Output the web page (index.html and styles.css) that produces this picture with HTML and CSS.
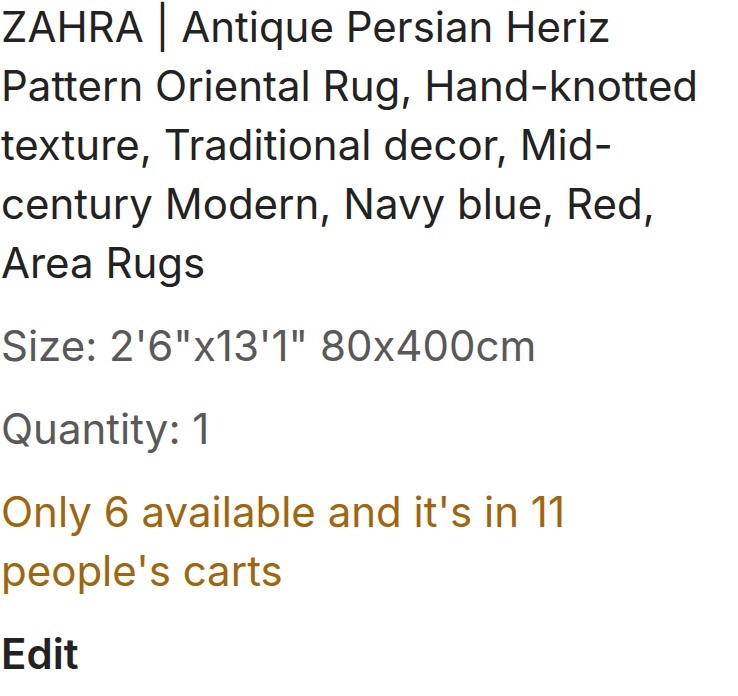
FILE: index.html
```html
<!DOCTYPE html>
<html>
<head>
<meta charset="utf-8">
<link rel="stylesheet" href="styles.css">
</head>
<body>
<div class="item">
  <p class="title">ZAHRA | Antique Persian Heriz Pattern Oriental Rug, Hand-knotted texture, Traditional decor, Mid-century Modern, Navy blue, Red, Area Rugs</p>
  <p class="meta">Size: 2'6"x13'1" 80x400cm</p>
  <p class="meta">Quantity: 1</p>
  <p class="stock">Only 6 available and it's in 11 people's carts</p>
  <p class="edit">Edit</p>
</div>
</body>
</html>
```
FILE: styles.css
```css
html, body { margin: 0; padding: 0; background: #fff; }
.item {
  font-family: Inter, "Noto Sans", sans-serif;
  font-size: 42px;
  line-height: 59px;
  font-feature-settings: "calt" 0;
  padding: 0 0 0 1px;
  color: #222;
}
.item p { margin: 0; }
.item .title { color: #222; margin-top: -3px; }
.item .meta { color: #595959; margin-top: 24px; }
.item .stock { color: #a2660a; margin-top: 24px; }
.item .edit { font-weight: 600; margin-top: 24px; }
```
